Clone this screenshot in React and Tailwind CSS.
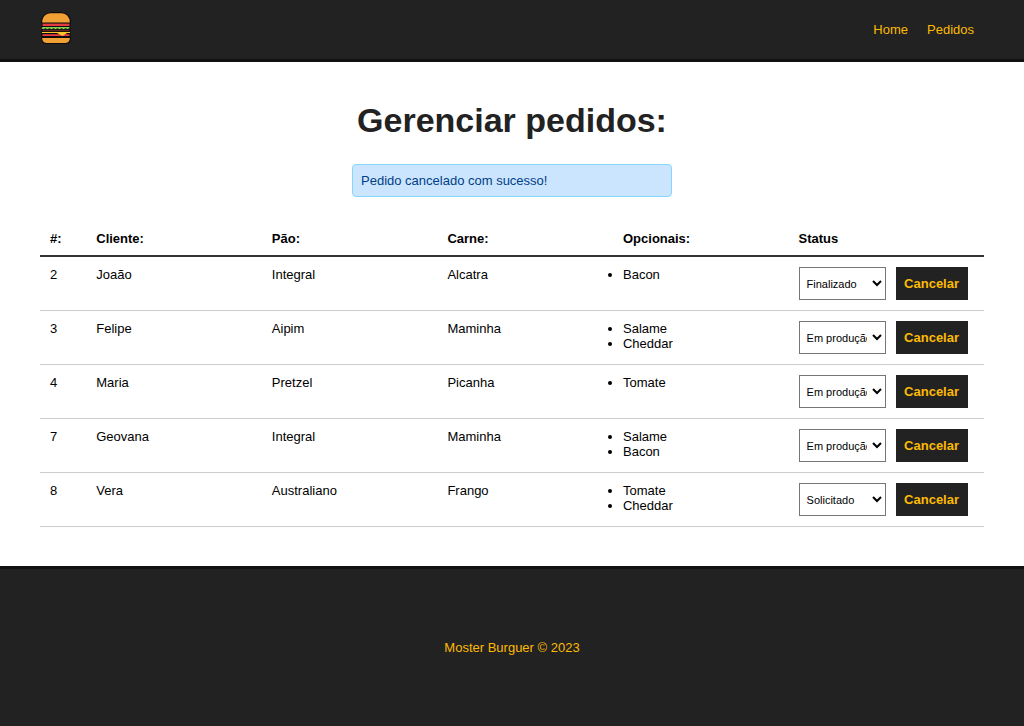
import { useState } from "react";

const STATUSES = ["Solicitado", "Em produção", "Finalizado"];

const ORDERS = [
  { id: 2, client: "Joaão", bread: "Integral", meat: "Alcatra", extras: ["Bacon"], status: "Finalizado" },
  { id: 3, client: "Felipe", bread: "Aipim", meat: "Maminha", extras: ["Salame", "Cheddar"], status: "Em produção" },
  { id: 4, client: "Maria", bread: "Pretzel", meat: "Picanha", extras: ["Tomate"], status: "Em produção" },
  { id: 7, client: "Geovana", bread: "Integral", meat: "Maminha", extras: ["Salame", "Bacon"], status: "Em produção" },
  { id: 8, client: "Vera", bread: "Australiano", meat: "Frango", extras: ["Tomate", "Cheddar"], status: "Solicitado" },
];

function BurgerLogo() {
  return (
    <svg viewBox="0 0 32 32" className="size-8" aria-hidden="true">
      <rect x="1.5" y="9" width="29" height="17" rx="1" fill="#0d0d0d" />
      <path d="M1.5 11C1.5 4 6 .6 11 .6h10C26 .6 30.5 4 30.5 11Z" fill="#f0a035" stroke="#0d0d0d" strokeWidth="1.2" />
      <rect x="2.5" y="11.6" width="27" height="2.4" fill="#e63b45" />
      <path d="M2.5 15h27v1.2l-2 .8-2-.8-2 1-2-1-2 1-2-1-2 1-2-1-2 1-2-1-2 1-2-1-2 1-2-.8Z" fill="#86cf52" />
      <rect x="2.5" y="17.8" width="27" height="1.4" fill="#5d2a1c" />
      <rect x="2.5" y="22.2" width="27" height="1.8" fill="#e63b45" />
      <path d="M2 20h28v1h-3L22.5 24l-5.500-3H2Z" fill="#fcc62d" />
      <path d="M1.500 25.5h29c0 4-2 6-5 6h-19c-3 0-5-2-5-6Z" fill="#f0a035" stroke="#0d0d0d" strokeWidth="1.2" />
    </svg>
  );
}

function OrderRow({ order }) {
  const [status, setStatus] = useState(order.status);
  return (
    <tr className="border-b border-[#ccc] align-top">
      <td className="py-[10px] pl-[10px]">{order.id}</td>
      <td className="py-[10px] pl-[10px]">{order.client}</td>
      <td className="py-[10px] pl-[10px]">{order.bread}</td>
      <td className="py-[10px] pl-[10px]">{order.meat}</td>
      <td className="py-[10px] pl-[10px]">
        <ul className="list-disc">
          {order.extras.map((extra) => (
            <li key={extra}>{extra}</li>
          ))}
        </ul>
      </td>
      <td className="py-[10px] pl-[10px]">
        <div className="flex gap-[10px]">
          <select
            aria-label={`Status do pedido ${order.id}`}
            value={status}
            onChange={(event) => setStatus(event.target.value)}
            className="h-[33px] w-[87px] border border-[#767676] bg-white pr-[2px] pl-[3px] text-[11px]"
          >
            {STATUSES.map((name) => (
              <option key={name}>{name}</option>
            ))}
          </select>
          <button
            type="button"
            className="h-[33px] w-[72px] cursor-pointer bg-[#222] text-[13px] font-bold text-[#fcba03]"
          >
            Cancelar
          </button>
        </div>
      </td>
    </tr>
  );
}

export default function App() {
  return (
    <div className="flex min-h-screen flex-col bg-white font-['Liberation_Sans',Arial,sans-serif] text-[13px] leading-[15px] text-black">
      <header className="flex items-start justify-between border-b-[3px] border-[#111] bg-[#222] px-10 pt-3 pb-[15px]">
        <a href="#home" aria-label="Moster Burguer">
          <BurgerLogo />
        </a>
        <nav className="flex gap-[19px] px-[10px] pt-[10px] text-[#fcba03]">
          <a href="#home">Home</a>
          <a href="#pedidos">Pedidos</a>
        </nav>
      </header>

      <main className="grow px-10 pt-10 pb-[39px]">
        <h1 className="mb-[26px] text-center text-[34px] leading-[36px] font-bold text-[#222]">
          Gerenciar pedidos:
        </h1>
        <p
          role="status"
          className="mx-auto mb-[34px] max-w-80 rounded-[4px] border border-[#85d7ff] bg-[#cce5ff] p-2 text-[#004085]"
        >
          Pedido cancelado com sucesso!
        </p>
        <table className="w-full table-fixed border-collapse">
          <thead>
            <tr className="border-b-2 border-[#333] text-left">
              <th className="w-[4.9%] pb-[9px] pl-[10px]">#:</th>
              <th className="w-[18.6%] pb-[9px] pl-[10px]">Cliente:</th>
              <th className="w-[18.6%] pb-[9px] pl-[10px]">Pão:</th>
              <th className="w-[18.6%] pb-[9px] pl-[10px]">Carne:</th>
              <th className="w-[18.6%] pb-[9px] pl-[10px]">Opcionais:</th>
              <th className="pb-[9px] pl-[10px]">Status</th>
            </tr>
          </thead>
          <tbody>
            {ORDERS.map((order) => (
              <OrderRow key={order.id} order={order} />
            ))}
          </tbody>
        </table>
      </main>

      <footer className="flex h-40 items-center justify-center border-t-[3px] border-[#111] bg-[#222] text-[#fcba03]">
        <p>Moster Burguer © 2023</p>
      </footer>
    </div>
  );
}
